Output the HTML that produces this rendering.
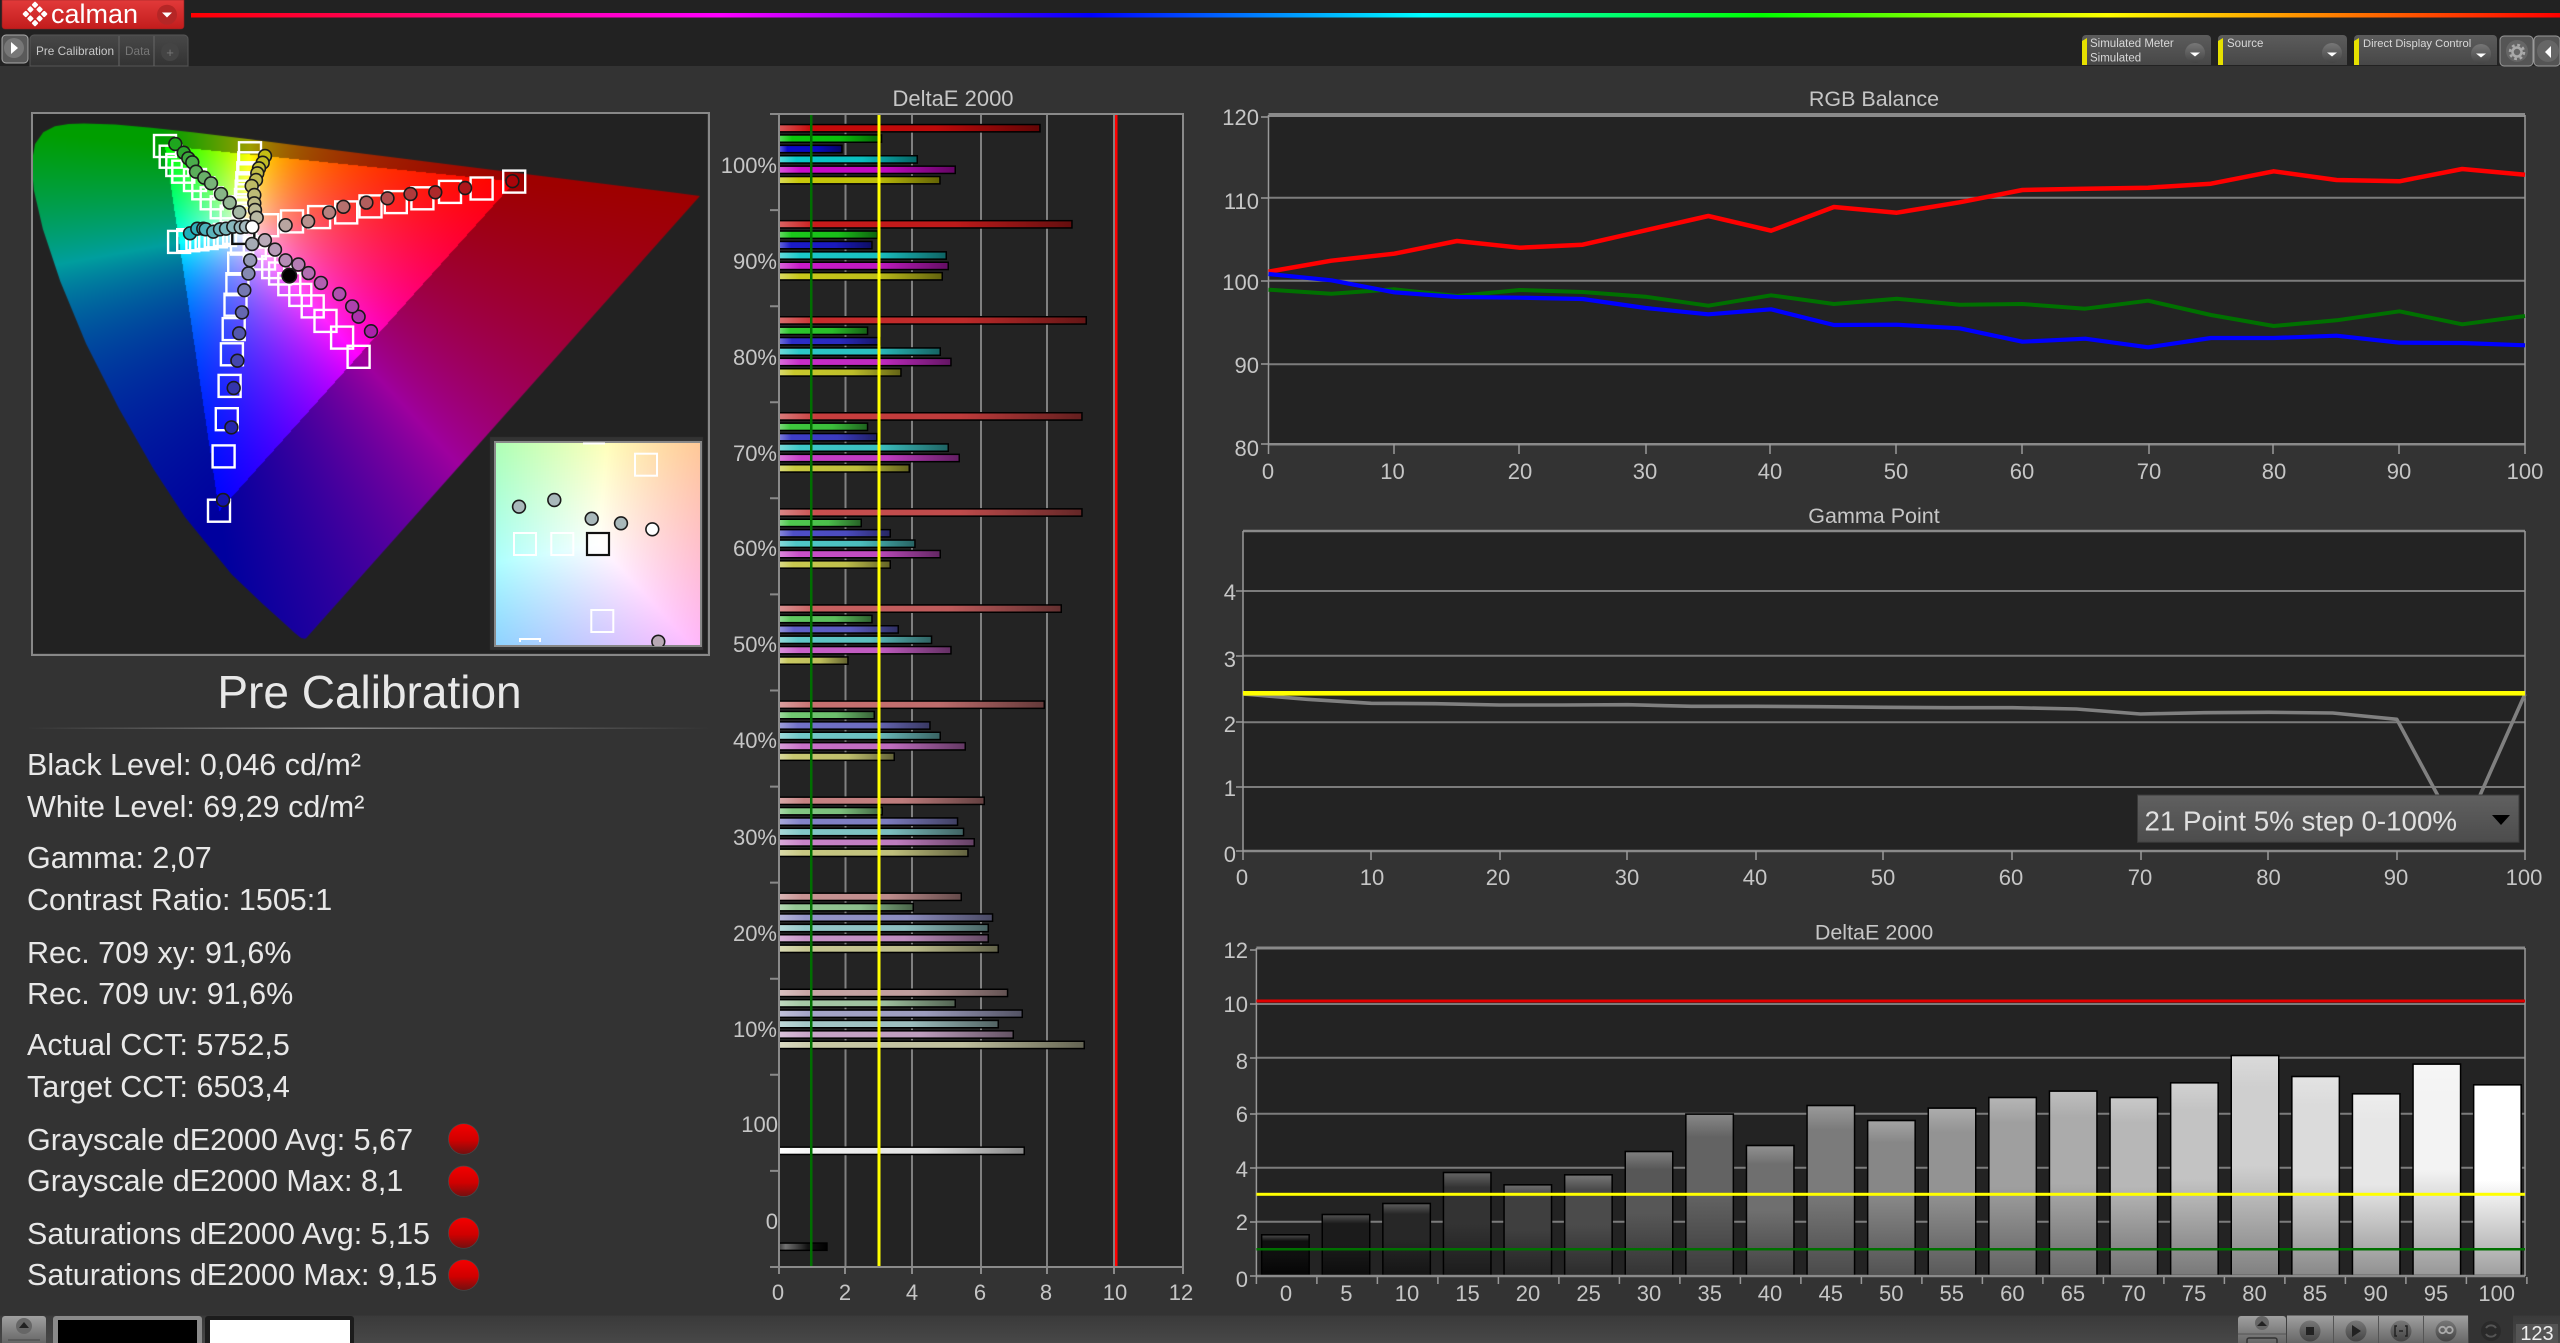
<!DOCTYPE html>
<html lang="en">
<head>
<meta charset="utf-8">
<title>Calman</title>
<style>
html,body{margin:0;padding:0;width:2560px;height:1343px;overflow:hidden;background:#333}
#top{position:absolute;left:0;top:0;width:2560px;height:66px;background:#222}
#cie{position:absolute;left:33px;top:114px;background:#222}
#ins{position:absolute;left:495px;top:442px}
#s{position:absolute;left:0;top:0}
text{font-family:"Liberation Sans",sans-serif}
.l{font-size:22px;fill:#c6c6c6}
.t{font-size:21.5px;fill:#c6c6c6;text-anchor:middle}
.m{text-anchor:middle}
.e{text-anchor:end}
.st{font-size:30.5px;fill:#e8e8e8}
</style>
</head>
<body>
<div id="top"></div>
<canvas id="cie" width="674" height="539"></canvas>
<canvas id="ins" width="206" height="204"></canvas>
<svg id="s" width="2560" height="1343" viewBox="0 0 2560 1343">
<defs>
<linearGradient id="rain" x1="191" x2="2560" y1="0" y2="0" gradientUnits="userSpaceOnUse">
<stop offset="0" stop-color="#f00"/><stop offset=".223" stop-color="#f0f"/><stop offset=".38" stop-color="#00f"/><stop offset=".52" stop-color="#0ff"/><stop offset=".663" stop-color="#0f0"/><stop offset=".809" stop-color="#ff0"/><stop offset="1" stop-color="#f00"/>
</linearGradient>
<linearGradient id="logo" x1="0" x2="0" y1="0" y2="1"><stop offset="0" stop-color="#e23a3a"/><stop offset="1" stop-color="#c21c1c"/></linearGradient>
<linearGradient id="tb" x1="0" x2="0" y1="0" y2="1"><stop offset="0" stop-color="#5c5c5c"/><stop offset="1" stop-color="#474747"/></linearGradient>
<linearGradient id="tab" x1="0" x2="0" y1="0" y2="1"><stop offset="0" stop-color="#484848"/><stop offset="1" stop-color="#333"/></linearGradient>
<linearGradient id="btn" x1="0" x2="0" y1="0" y2="1"><stop offset="0" stop-color="#a0a0a0"/><stop offset="1" stop-color="#666"/></linearGradient>
<linearGradient id="circ" x1="0" x2="0" y1="0" y2="1"><stop offset="0" stop-color="#777"/><stop offset="1" stop-color="#444"/></linearGradient>
<linearGradient id="dd" x1="0" x2="0" y1="0" y2="1"><stop offset="0" stop-color="#606060"/><stop offset="1" stop-color="#4c4c4c"/></linearGradient>
<linearGradient id="bar" x1="0" x2="0" y1="0" y2="1"><stop offset="0" stop-color="#3a3a3a"/><stop offset="1" stop-color="#484848"/></linearGradient>
<linearGradient id="dot" x1="0" x2="0" y1="0" y2="1"><stop offset="0" stop-color="#f40000"/><stop offset=".55" stop-color="#d00000"/><stop offset="1" stop-color="#701010"/></linearGradient>
<linearGradient id="sep" x1="0" x2="1" y1="0" y2="0"><stop offset="0" stop-color="#333"/><stop offset=".45" stop-color="#8a8a8a"/><stop offset="1" stop-color="#333"/></linearGradient>
<g id="gd"></g>
</defs>

<!-- top bar -->
<path d="M2 0H184V26a3 3 0 0 1-3 3H5a3 3 0 0 1-3-3Z" fill="url(#logo)" stroke="#8a2020" stroke-width=".6"/>
<g fill="#fff" transform="translate(35 14) rotate(45)">
<rect x="-9" y="-9" width="5" height="5" rx="1"/><rect x="-2.5" y="-9" width="5" height="5" rx="1"/><rect x="4" y="-9" width="5" height="5" rx="1"/>
<rect x="-9" y="-2.5" width="5" height="5" rx="1"/><rect x="4" y="-2.5" width="5" height="5" rx="1"/>
<rect x="-9" y="4" width="5" height="5" rx="1"/><rect x="-2.5" y="4" width="5" height="5" rx="1"/><rect x="4" y="4" width="5" height="5" rx="1"/>
</g>
<text x="51" y="23" font-size="27" fill="#fff">calman</text>
<circle cx="167" cy="14.7" r="10" fill="#b52626"/><path d="M162 12.5h10l-5 5Z" fill="#fff"/>
<rect x="191" y="13" width="2369" height="4.5" fill="url(#rain)"/>

<rect x="2" y="35" width="26" height="28" rx="4" fill="#5a5a5a" stroke="#aaa" stroke-width="1"/>
<circle cx="14" cy="48" r="10" fill="#777"/><path d="M11 42l7 6-7 6Z" fill="#fff"/>
<path d="M30 66V39a4 4 0 0 1 4-4H184a4 4 0 0 1 4 4V66Z" fill="url(#tab)" stroke="#555"/>
<path d="M119 36V66M154 36V66" stroke="#666"/>
<text x="36" y="55" font-size="11.8" fill="#c8c8c8">Pre Calibration</text>
<text x="125" y="55" font-size="11.8" fill="#777">Data</text>
<circle cx="170" cy="52" r="9" fill="#444"/><text x="170" y="57" font-size="13" fill="#777" class="m">+</text>

<path d="M2082 65V39a4 4 0 0 1 4-4H2207a4 4 0 0 1 4 4V65Z" fill="url(#tb)"/>
<path d="M2218 65V39a4 4 0 0 1 4-4H2343a4 4 0 0 1 4 4V65Z" fill="url(#tb)"/>
<path d="M2354 65V39a4 4 0 0 1 4-4H2493a4 4 0 0 1 4 4V65Z" fill="url(#tb)"/>
<path d="M2082 65V41l5-3V65Z M2218 65V41l5-3V65Z M2354 65V41l5-3V65Z" fill="#e6e000"/>
<text x="2090" y="47" font-size="11.5" fill="#d8d8d8">Simulated Meter</text>
<text x="2090" y="61.500" font-size="11.5" fill="#d8d8d8">Simulated</text>
<text x="2227" y="47" font-size="11.5" fill="#d8d8d8">Source</text>
<text x="2363" y="47" font-size="11.2" fill="#d8d8d8">Direct Display Control</text>
<g fill="url(#circ)"><circle cx="2195" cy="53" r="10"/><circle cx="2332" cy="53" r="10"/><circle cx="2481" cy="54" r="10"/></g>
<path d="M2190 52.500h10l-5 4Z M2327 52.500h10l-5 4Z M2476 53.500h10l-5 4Z" fill="#fff"/>
<rect x="2500" y="36" width="33" height="30" rx="4" fill="#555" stroke="#999"/>
<rect x="2534" y="36" width="26" height="30" rx="4" fill="#555" stroke="#999"/>
<circle cx="2517" cy="51" r="11" fill="#666"/><circle cx="2548" cy="51" r="11" fill="#666"/>
<circle cx="2517" cy="52" r="4.500" fill="none" stroke="#aaa" stroke-width="2.500"/>
<circle cx="2517" cy="52" r="7" fill="none" stroke="#aaa" stroke-width="2.500" stroke-dasharray="2.800 2.700"/>
<path d="M2551 46v12l-6-6Z" fill="#fff"/>

<!-- CIE frames -->
<rect x="32" y="113" width="677" height="542" fill="none" stroke="#888" stroke-width="2"/>
<rect x="495" y="442" width="206" height="204" fill="none" stroke="#888" stroke-width="2"/>
<g id="cm"></g>

<!-- Stats -->
<text x="369.500" y="708" font-size="46" fill="#e8e8e8" class="m">Pre Calibration</text>
<rect x="27" y="727.500" width="683" height="1.500" fill="url(#sep)"/>
<text class="st" x="27" y="775">Black Level: 0,046 cd/m²</text>
<text class="st" x="27" y="817">White Level: 69,29 cd/m²</text>
<text class="st" x="27" y="868">Gamma: 2,07</text>
<text class="st" x="27" y="910">Contrast Ratio: 1505:1</text>
<text class="st" x="27" y="963">Rec. 709 xy: 91,6%</text>
<text class="st" x="27" y="1004">Rec. 709 uv: 91,6%</text>
<text class="st" x="27" y="1055">Actual CCT: 5752,5</text>
<text class="st" x="27" y="1097">Target CCT: 6503,4</text>
<text class="st" x="27" y="1150">Grayscale dE2000 Avg: 5,67</text>
<text class="st" x="27" y="1191">Grayscale dE2000 Max: 8,1</text>
<text class="st" x="27" y="1244">Saturations dE2000 Avg: 5,15</text>
<text class="st" x="27" y="1285">Saturations dE2000 Max: 9,15</text>
<g fill="url(#dot)" stroke="#4a4a4a" stroke-width=".7">
<circle cx="463.700" cy="1139" r="15.300"/><circle cx="463.700" cy="1181.300" r="15.300"/><circle cx="463.700" cy="1233" r="15.300"/><circle cx="463.700" cy="1275" r="15.300"/>
</g>

<!-- Horizontal DeltaE -->
<rect x="779" y="114" width="404" height="1153" fill="#232323"/>
<path d="M845.500 114V1267M912 114V1267M981 114V1267M1047 114V1267M1114 114V1267" stroke="#808080" stroke-width="2"/>
<g id="hb"></g>
<rect x="810" y="114" width="2.500" height="1153" fill="#007000"/>
<rect x="877.500" y="114" width="3" height="1153" fill="#ff0"/>
<rect x="1115" y="114" width="2.500" height="1153" fill="#f00"/>
<path d="M779 1267V114H1183V1267H770" fill="none" stroke="#8a8a8a" stroke-width="2"/>
<path id="ht" d="" stroke="#8a8a8a" stroke-width="2"/>
<text class="t" style="font-size:22px" x="953" y="106">DeltaE 2000</text>
<g class="l">
<text class="l e" x="777" y="173">100%</text><text class="l e" x="777" y="269">90%</text><text class="l e" x="777" y="365">80%</text><text class="l e" x="777" y="461">70%</text><text class="l e" x="777" y="556">60%</text><text class="l e" x="777" y="652">50%</text><text class="l e" x="777" y="748">40%</text><text class="l e" x="777" y="845">30%</text><text class="l e" x="777" y="941">20%</text><text class="l e" x="777" y="1037">10%</text><text class="l e" x="778" y="1132">100</text><text class="l e" x="778" y="1229">0</text>
<text class="l m" x="778" y="1300">0</text><text class="l m" x="845" y="1300">2</text><text class="l m" x="912" y="1300">4</text><text class="l m" x="980" y="1300">6</text><text class="l m" x="1046" y="1300">8</text><text class="l m" x="1115" y="1300">10</text><text class="l m" x="1181" y="1300">12</text>
</g>

<!-- RGB Balance -->
<rect x="1268.500" y="115" width="1256.500" height="329" fill="#232323"/>
<path d="M1268.500 197.700H2525M1268.500 280.700H2525M1268.500 364.300H2525" stroke="#7c7c7c" stroke-width="2"/>
<path d="M1268.500 115H2525" stroke="#8a8a8a" stroke-width="4"/>
<path d="M1268.500 444.300H2525" stroke="#8a8a8a" stroke-width="2.500"/>
<path d="M1268.500 115V454M2525 115V454M1261 117H1268M1261 198H1268M1261 281H1268M1261 364H1268M1261 444H1268" stroke="#999" stroke-width="1.500" fill="none"/>
<path d="M1394 444V454M1519 444V454M1646 444V454M1770 444V454M1896 444V454M2022 444V454M2149 444V454M2273 444V454M2399 444V454" stroke="#999" stroke-width="1.500"/>
<polyline id="lg" fill="none" stroke="#007000" stroke-width="4" stroke-linejoin="round"/>
<polyline id="lr" fill="none" stroke="#f00" stroke-width="4.500" stroke-linejoin="round"/>
<polyline id="lb" fill="none" stroke="#00f" stroke-width="4.200" stroke-linejoin="round"/>
<text class="t" x="1874" y="106">RGB Balance</text>
<text class="l e" x="1259" y="125">120</text><text class="l e" x="1259" y="209">110</text><text class="l e" x="1259" y="290">100</text><text class="l e" x="1259" y="373">90</text><text class="l e" x="1259" y="456">80</text>
<text class="l m" x="1268" y="479">0</text><text class="l m" x="1392.500" y="479">10</text><text class="l m" x="1520" y="479">20</text><text class="l m" x="1645" y="479">30</text><text class="l m" x="1770" y="479">40</text><text class="l m" x="1896" y="479">50</text><text class="l m" x="2022" y="479">60</text><text class="l m" x="2149" y="479">70</text><text class="l m" x="2274" y="479">80</text><text class="l m" x="2399" y="479">90</text><text class="l m" x="2525" y="479">100</text>

<!-- Gamma -->
<rect x="1243" y="531" width="1282" height="320" fill="#232323"/>
<path d="M1243 591H2525M1243 655.700H2525M1243 722.300H2525M1243 787H2525" stroke="#7c7c7c" stroke-width="2"/>
<path d="M1243 531H2525" stroke="#8a8a8a" stroke-width="2.500"/>
<path d="M1243 851H2525" stroke="#8a8a8a" stroke-width="2.500"/>
<path d="M1243 531V860M2525 531V860M1236 591H1243M1236 656H1243M1236 722H1243M1236 787H1243M1236 851H1243" stroke="#999" stroke-width="1.500" fill="none"/>
<path d="M1371 851V860M1500 851V860M1627 851V860M1756 851V860M1883 851V860M2012 851V860M2141 851V860M2268 851V860M2397 851V860" stroke="#999" stroke-width="1.500"/>
<polyline id="lgm" fill="none" stroke="#808080" stroke-width="3.600" stroke-linejoin="round"/>
<rect x="1243" y="691" width="1282" height="4.600" fill="#ff0"/>
<rect x="2137.500" y="795" width="381.500" height="47.300" fill="url(#dd)" stroke="#3a3a3a"/>
<text x="2144.500" y="830.500" font-size="27.700" fill="#e0e0e0">21 Point 5% step 0-100%</text>
<path d="M2492 815h18l-9 10Z" fill="#000"/>
<text class="t" x="1874" y="523">Gamma Point</text>
<text class="l e" x="1236" y="600">4</text><text class="l e" x="1236" y="667">3</text><text class="l e" x="1236" y="732">2</text><text class="l e" x="1236" y="796">1</text><text class="l e" x="1236" y="862">0</text>
<text class="l m" x="1242" y="885">0</text><text class="l m" x="1372" y="885">10</text><text class="l m" x="1498" y="885">20</text><text class="l m" x="1627" y="885">30</text><text class="l m" x="1755" y="885">40</text><text class="l m" x="1883" y="885">50</text><text class="l m" x="2011" y="885">60</text><text class="l m" x="2140" y="885">70</text><text class="l m" x="2268.500" y="885">80</text><text class="l m" x="2396" y="885">90</text><text class="l m" x="2524" y="885">100</text>

<!-- Bottom DeltaE -->
<rect x="1256.400" y="948" width="1268.600" height="328" fill="#232323"/>
<path d="M1256.400 1004H2525M1256.400 1057.700H2525M1256.400 1113.700H2525M1256.400 1167.700H2525M1256.400 1221.700H2525" stroke="#7c7c7c" stroke-width="2"/>
<path d="M1256.400 948H2525" stroke="#8a8a8a" stroke-width="3"/>
<g id="vb"></g>
<path d="M1256.400 1276H2525" stroke="#8a8a8a" stroke-width="2.500"/>
<path d="M1256.400 948V1284M2525 948V1276M1250 950H1256M1250 1004H1256M1250 1058H1256M1250 1114H1256M1250 1168H1256M1250 1222H1256M1250 1276H1256" stroke="#999" stroke-width="1.500" fill="none"/>
<g id="vt"></g>
<rect x="1256.400" y="999.500" width="1268.600" height="3" fill="#e00000"/>
<rect x="1256.400" y="1192.800" width="1268.600" height="3" fill="#ff0"/>
<rect x="1256.400" y="1248" width="1268.600" height="2.500" fill="#007000"/>
<text class="t" x="1874" y="939.500">DeltaE 2000</text>
<text class="l e" x="1248" y="958">12</text><text class="l e" x="1248" y="1012">10</text><text class="l e" x="1248" y="1069">8</text><text class="l e" x="1248" y="1122">6</text><text class="l e" x="1248" y="1177">4</text><text class="l e" x="1248" y="1230">2</text><text class="l e" x="1248" y="1287">0</text>
<text class="l m" x="1286" y="1301">0</text><text class="l m" x="1346.400" y="1301">5</text><text class="l m" x="1407" y="1301">10</text><text class="l m" x="1467.500" y="1301">15</text><text class="l m" x="1528" y="1301">20</text><text class="l m" x="1588.600" y="1301">25</text><text class="l m" x="1649" y="1301">30</text><text class="l m" x="1709.700" y="1301">35</text><text class="l m" x="1770" y="1301">40</text><text class="l m" x="1830.700" y="1301">45</text><text class="l m" x="1891.300" y="1301">50</text><text class="l m" x="1951.800" y="1301">55</text><text class="l m" x="2012.400" y="1301">60</text><text class="l m" x="2072.900" y="1301">65</text><text class="l m" x="2133.500" y="1301">70</text><text class="l m" x="2194" y="1301">75</text><text class="l m" x="2254.500" y="1301">80</text><text class="l m" x="2315" y="1301">85</text><text class="l m" x="2375.600" y="1301">90</text><text class="l m" x="2436" y="1301">95</text><text class="l m" x="2496.700" y="1301">100</text>

<!-- Status bar -->
<rect x="0" y="1315.500" width="2560" height="28" fill="url(#bar)"/>
<path d="M2 1343V1319a3 3 0 0 1 3-3H43a3 3 0 0 1 3 3V1343Z" fill="url(#btn)"/>
<circle cx="24" cy="1326" r="8" fill="#666"/><path d="M19 1328l5-6 5 6Z" fill="#222"/><path d="M8 1340H40" stroke="#444"/>
<path d="M53 1343V1319a3 3 0 0 1 3-3H199a3 3 0 0 1 3 3V1343Z" fill="#8a8a8a"/>
<rect x="58" y="1320" width="139" height="23" fill="#000"/>
<path d="M205 1343V1319a3 3 0 0 1 3-3H351a3 3 0 0 1 3 3V1343Z" fill="#1c1c1c"/>
<rect x="210" y="1320" width="140" height="23" fill="#fff"/>
<path d="M2238 1343V1319a3 3 0 0 1 3-3H2283a3 3 0 0 1 3 3V1343Z" fill="url(#btn)"/>
<path d="M2238 1334H2286" stroke="#555"/>
<circle cx="2262" cy="1323" r="7" fill="#666"/><path d="M2257 1326l5-5 5 5Z" fill="#222"/>
<rect x="2247" y="1338" width="30" height="8" rx="2" fill="none" stroke="#333" stroke-width="1.500"/>
<rect x="2287" y="1315.500" width="181" height="27.500" fill="url(#btn)"/>
<path d="M2333.500 1316V1343M2378.500 1316V1343M2423.500 1316V1343" stroke="#555"/>
<g fill="url(#circ)"><circle cx="2310" cy="1331" r="10.500"/><circle cx="2356" cy="1331" r="10.500"/><circle cx="2401" cy="1331" r="10.500"/><circle cx="2446" cy="1331" r="10.500"/></g>
<rect x="2306" y="1327" width="8" height="8" fill="#222"/>
<path d="M2352 1325l9 6-9 6Z" fill="#222"/>
<path d="M2397 1326h-2v10h2M2405 1326h2v10h-2M2399 1331h4" fill="none" stroke="#222" stroke-width="1.500"/>
<g fill="none" stroke="#aaa" stroke-width="1.800"><circle cx="2442.500" cy="1330" r="3.200"/><circle cx="2449.500" cy="1330" r="3.200"/></g>
<rect x="2469" y="1315.500" width="44" height="27.500" fill="#333"/>
<circle cx="2491" cy="1331" r="10" fill="#2a2a2a"/>
<path d="M2496 1328a6 6 0 0 0-10 0M2486 1334a6 6 0 0 0 10 0" fill="none" stroke="#555" stroke-width="2"/>
<rect x="2516" y="1324" width="42" height="19" fill="#555"/>
<text x="2537" y="1340" font-size="20" fill="#eee" class="m">123</text>
</svg>

<script>
(function(){
function col(u,v,d,o,i){
 var D=6*u-16*v+12,x=9*u/D,y=4*v/D;
 if(y<0.0005)y=0.0005;
 var X=x/y,Z=(1-x-y)/y;
 var r=3.2406*X-1.5372-.4986*Z,g=-.9689*X+1.8758+.0415*Z,b=.0557*X-.2040+1.0570*Z;
 var f=(r>=0&&g>=0&&b>=0)?1:.62;
 r=Math.max(r,0);g=Math.max(g,0);b=Math.max(b,0);
 var m=Math.max(r,g,b)||1;
 d[i]=255*Math.pow(r/m,o)*f;d[i+1]=255*Math.pow(g/m,o)*f;d[i+2]=255*Math.pow(b/m,o)*f;d[i+3]=255;
}
var c=document.getElementById('cie'),x=c.getContext('2d'),im=x.createImageData(674,539),d=im.data,i=0,px,py;
for(py=0;py<539;py++)for(px=0;px<674;px++){
 col(.125+(px+33-164.4)/1074.4,.5625-(py+114-145.3)/903,d,1,i);i+=4;
}
x.putImageData(im,0,0);
var L=[[.1741,.005],[.1733,.0048],[.1714,.0051],[.1689,.0069],[.1644,.0109],[.1566,.0177],[.144,.0297],[.1241,.0578],[.1096,.0868],[.0913,.1327],[.0687,.2007],[.0454,.295],[.0235,.4127],[.0082,.5384],[.0039,.6548],[.0139,.7502],[.0389,.812],[.0743,.8338],[.1142,.8262],[.1547,.8059],[.2296,.7543],[.3016,.6923],[.3731,.6245],[.4441,.5547],[.5125,.4866],[.5752,.4242],[.627,.3725],[.6915,.3083],[.726,.274],[.7347,.2653]];
x.globalCompositeOperation='destination-in';
x.beginPath();
L.forEach(function(p,k){
 var q=-2*p[0]+12*p[1]+3,u=4*p[0]/q,v=9*p[1]/q,
 X=164.4+1074.4*(u-.125)-33,Y=145.3+903*(.5625-v)-114;
 if(k)x.lineTo(X,Y);else x.moveTo(X,Y);
});
x.closePath();x.fill();
x.globalCompositeOperation='source-over';
x.fillStyle='#333';x.fillRect(490-33,437-114,213,213);
var c2=document.getElementById('ins'),x2=c2.getContext('2d'),im2=x2.createImageData(206,204),d2=im2.data;
i=0;
for(py=0;py<204;py++)for(px=0;px<206;px++){
 col(.1978+(px+495-598)/4190,.4683-(py+442-544)/3520,d2,.62,i);i+=4;
}
x2.putImageData(im2,0,0);

var z1=function(a){return [a[0]/2.178,a[1]/2.34]},z10=function(a){return [140+a[0]/3,120+a[1]/3]},z11=function(a){return [480+a[0]/3,430+a[1]/3]};
var s='';
function sq(p,st,fill,w){var S=22;return '<rect x="'+(p[0]-S/2).toFixed(1)+'" y="'+(p[1]-S/2).toFixed(1)+'" width="'+S+'" height="'+S+'" fill="'+(fill||'none')+'" stroke="'+st+'" stroke-width="'+(w||2.4)+'"/>'}
function ci(p,f,r){return '<circle cx="'+p[0].toFixed(1)+'" cy="'+p[1].toFixed(1)+'" r="'+(r||6.4)+'" fill="'+f+'" stroke="#1a1a1a" stroke-width="1.6"/>'}
function mx(a,b,t){return 'rgb('+a.map(function(v,k){return Math.round(v+(b[k]-v)*t)}).join(',')+')'}
[[[75,78],[92,110],[112,135],[130,155],[165,180],[190,205],[215,235],[245,262],[275,290]].map(z10),
 [[330,100],[328,130],[325,160],[322,190],[320,215],[318,240],[315,265],[312,290]].map(z10),
 [[1120,425],[1049,441],[980,449],[920,464],[862,473],[807,483],[754,497],[695,508],[636,518],[582,527]].map(z1),
 [[390,566],[410,562],[430,560],[450,557],[470,553],[490,550],[510,545]].map(z1),
 [[477,1195],[487,1068],[494,981],[500,903],[505,829],[509,770],[513,713],[517,665],[521,617],[527,570]].map(z1),
 [[781,835],[745,790],[709,751],[681,717],[654,690],[630,665],[610,640],[595,625],[575,605],[555,580]].map(z1)
].forEach(function(a){a.forEach(function(p){s+=sq(p,'#fff')})});
s+=sq(z1([530,545]),'#111');
var ser=[
 {p:[[106,72],[131,98],[145,115],[157,127],[168,155],[193,173],[213,190],[243,222],[269,248],[298,277]].map(z10),a:[30,165,30],b:[165,185,165]},
 {p:[[375,108],[368,128],[357,145],[352,160],[348,180],[335,198],[343,225],[343,250],[345,270],[350,293]].map(z10),a:[195,190,20],b:[185,185,165]},
 {p:[[1116,424],[1013,440],[948,450],[894,454],[844,464],[798,474],[748,484],[717,497],[671,518],[622,527]].map(z1),a:[170,5,10],b:[185,165,160]},
 {p:[[150,340],[172,326],[190,326],[197,328],[220,335],[240,328],[258,326],[280,320],[302,322],[318,320]].map(z10),a:[30,175,185],b:[165,185,190]},
 {p:[[486,1170],[504,1000],[509,908],[517,844],[521,780],[527,731],[532,679],[541,640],[545,609],[549,571]].map(z1),a:[20,20,170],b:[165,170,180]},
 {p:[[808,775],[781,741],[767,717],[739,688],[699,662],[672,639],[650,619],[622,609],[599,584],[577,562]].map(z1),a:[170,35,170],b:[185,170,185]}
];
ser.forEach(function(q){q.p.forEach(function(p,k){s+=ci(p,mx(q.a,q.b,k/9))})});
s+=ci(z10([337,321]),'#fff');
s+=ci(z1([630,645]),'#000',7.2);
/* inset */
[[135,342],[247,342],[498,104],[367,573]].forEach(function(a){s+=sq(z11(a),'#fff','none',2)});
s+='<path d="M583 443.500h22M520 642v-3h20v3" fill="none" stroke="#fff" stroke-width="2"/>';
s+=sq(z11([354,342]),'#111','rgba(255,255,255,.6)',2.2);
[[117,230],[223,210],[335,266],[423,280]].forEach(function(a){s+=ci(z11(a),'#a8b8ba',6.4)});
s+=ci(z11([517,298]),'#fff',6.4);
s+='<clipPath id="ic"><rect x="495" y="442" width="206" height="204"/></clipPath><g clip-path="url(#ic)">'+ci(z11([535,635]),'#b8a8b4',6.4)+'</g>';
document.getElementById('cm').innerHTML=s;

/* horizontal bars */
var V=[[1022,547,428,654,768,722],[1118,535,518,741,747,729],[1161,505,543,723,755,605],[1148,505,533,747,780,630],[1148,486,573,647,723,573],[1086,518,597,697,755,446],[1035,525,692,723,798,585],[855,549,775,793,825,806],[786,642,880,867,867,897],[925,768,969,897,942,1155]];
var H=[[1,0,0],[0,1,0],[0,0,1],[0,1,1],[1,0,1],[1,1,0]];
var defs='',b='';
var W=[255,255,255],K=[0,0,0];
function hb(id,y,end,base,g0,g1){
 var e=700+end/3;
 defs+='<linearGradient id="'+id+'" x1="0" x2="1" y1="0" y2="0"><stop offset="0" stop-color="'+(g0||mx(base,W,.3))+'"/><stop offset=".12" stop-color="'+(g0?mx(base,W,.4):mx(base,K,0))+'"/><stop offset=".6" stop-color="'+mx(base,K,.05)+'"/><stop offset="1" stop-color="'+(g1||mx(base,K,.5))+'"/></linearGradient>';
 b+='<rect x="780" y="'+(y-4.4).toFixed(1)+'" width="'+(e-780).toFixed(1)+'" height="8.8" fill="#000"/>';
 b+='<rect x="780" y="'+(y-2.9).toFixed(1)+'" width="'+(e-781.5).toFixed(1)+'" height="5.8" fill="url(#'+id+')"/>';
}
V.forEach(function(r,k){
 var G=114+96.08*k,lo=10+k/9*155;
 r.forEach(function(v,j){
  var base=H[j].map(function(h){return h?200:lo});
  hb('h'+k+'_'+j,G+14.2+10.4*j,v,base);
 });
});
hb('hw',1150.8,975,[235,235,235],'#fff','#888');
hb('hk',1246.7,383,[20,20,20],'#444','#000');
document.getElementById('hb').innerHTML=b;
var t='';for(i=1;i<12;i++){t+='M770 '+(114+96.08*i).toFixed(1)+'H779'}t+='M770 114H779';
t+='M779 1267V1274M845 1267V1274M912 1267V1274M981 1267V1274M1047 1267V1274M1114 1267V1274M1183 1267V1274';
document.getElementById('ht').setAttribute('d',t);

/* RGB lines */
function pts(a,x0,st,y0){return a.map(function(p,k){return (x0+k*st).toFixed(1)+','+(y0+p/3).toFixed(1)}).join(' ')}
document.getElementById('lr').setAttribute('points',pts([605,572,551,513,533,524,481,438,482,411,428,397,360,356,353,341,304,330,334,297,314],1268.5,62.825,70));
document.getElementById('lg').setAttribute('points',pts([659,671,658,678,660,666,680,707,676,702,686,704,702,716,692,735,768,751,724,763,738],1268.5,62.825,70));
document.getElementById('lb').setAttribute('points',pts([612,631,667,681,683,687,714,733,718,765,764,775,815,806,832,804,804,797,818,819,826],1268.5,62.825,70));
document.getElementById('lgm').setAttribute('points',pts([612,628,640,641,645,645,644,649,649,650,652,653,653,657,672,668,667,669,688,1045,612],1243,64.1,490));

/* vertical bars */
var T=[972,911,878,785,822,792,722,610,704,584,629,592,560,541,560,516,434,497,549,460,522],vb='';
T.forEach(function(p,k){
 var y=910+p/3,xx=1262.4+60.6*k,w=46,bot=1274.7,
 g=function(v){v=Math.min(255,Math.round(v));return 'rgb('+v+','+v+','+v+')'};
 defs+='<linearGradient id="v'+k+'" x1="0" x2="0" y1="0" y2="1"><stop offset="0" stop-color="'+g(70+9.25*k)+'"/><stop offset=".14" stop-color="'+g(15+12*k)+'"/><stop offset=".5" stop-color="'+g(15+12*k)+'"/><stop offset="1" stop-color="'+g(5+7.75*k)+'"/></linearGradient>';
 vb+='<rect x="'+(xx-1.5).toFixed(1)+'" y="'+y.toFixed(1)+'" width="'+(w+3)+'" height="'+(1276-y).toFixed(1)+'" fill="#000"/>';
 vb+='<rect x="'+xx.toFixed(1)+'" y="'+(y+1.6).toFixed(1)+'" width="'+w+'" height="'+(bot-y-1.6).toFixed(1)+'" fill="url(#v'+k+')"/>';
});
document.getElementById('vb').innerHTML=vb;
var tt='';for(i=1;i<=21;i++){tt+='M'+(1256.4+60.5*i).toFixed(1)+' 1277V1284'}
document.getElementById('vt').innerHTML='<path d="'+tt+'" stroke="#999" stroke-width="1.5"/>';
document.getElementById('gd').innerHTML=defs;
})();
</script>
</body>
</html>
